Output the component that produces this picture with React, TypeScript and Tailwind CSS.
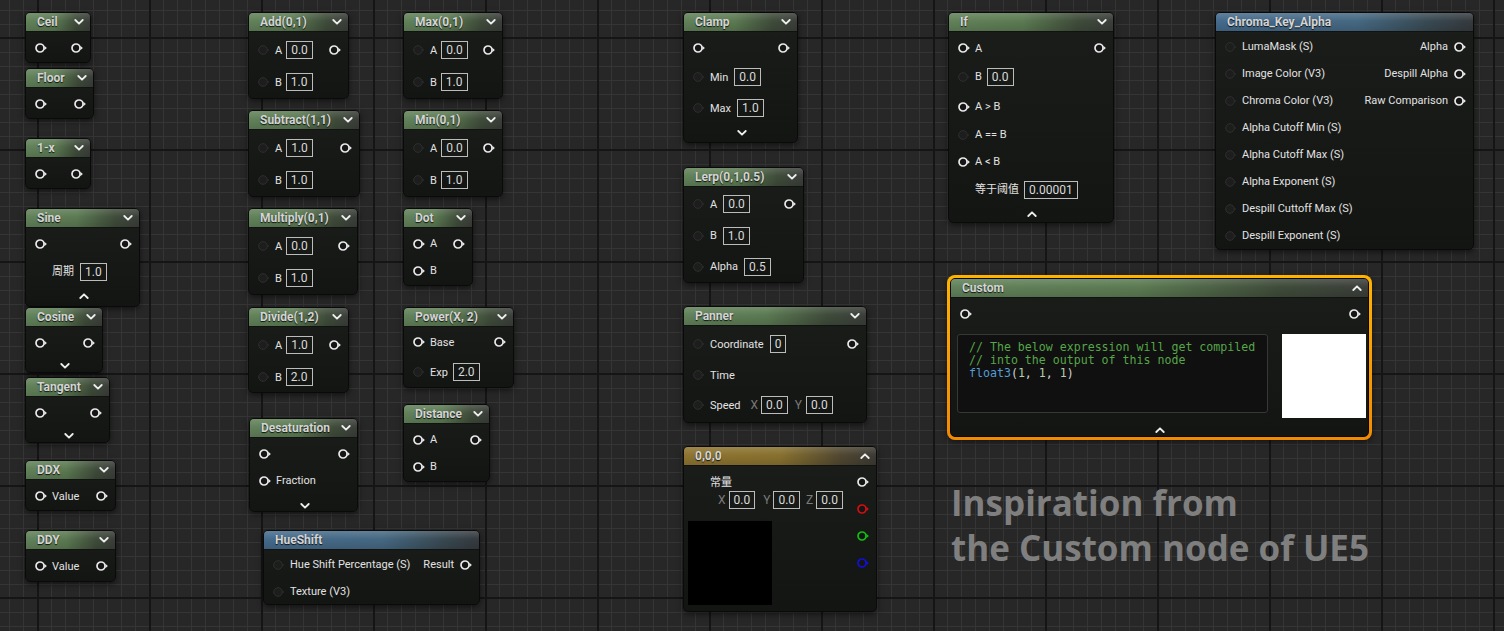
import React from "react";

type Tone = "green" | "blue" | "gold";

const HEAD: Record<Tone, string> = {
  green:
    "bg-[image:linear-gradient(to_bottom,rgba(255,255,255,0.14),rgba(255,255,255,0)_45%,rgba(0,0,0,0.12)),linear-gradient(to_right,#62825a_0%,#5b7a52_45%,#3f4c3a_78%,#3b3e3a_100%)]",
  blue:
    "bg-[image:linear-gradient(to_bottom,rgba(255,255,255,0.16),rgba(255,255,255,0)_45%,rgba(0,0,0,0.12)),linear-gradient(to_right,#456a8c_0%,#456882_55%,#38474f_85%,#353a3e_100%)]",
  gold:
    "bg-[image:linear-gradient(to_bottom,rgba(255,255,255,0.14),rgba(255,255,255,0)_45%,rgba(0,0,0,0.12)),linear-gradient(to_right,#8e7431_0%,#88712f_50%,#504731_82%,#3c3a34_100%)]",
};

function Pin({ on = true, color = "#e8e8e8" }: { on?: boolean; color?: string }) {
  if (!on)
    return (
      <svg width="12" height="10" viewBox="0 0 12 10" className="shrink-0">
        <circle cx="5" cy="5" r="4.3" fill="#1c1d1c" stroke="#2f302f" strokeWidth="1" />
        <path d="M9.6 3.4 L11.4 5 L9.6 6.6 Z" fill="#2a2b2a" />
      </svg>
    );
  return (
    <svg width="12" height="10" viewBox="0 0 12 10" className="shrink-0">
      <circle cx="5" cy="5" r="4" fill="#151515" stroke={color} strokeWidth="1.7" />
      <path d="M9.3 2.8 L11.9 5 L9.3 7.2 Z" fill={color} />
    </svg>
  );
}

function Chevron({ up = false }: { up?: boolean }) {
  return (
    <svg width="10" height="6" viewBox="0 0 10 6" className="shrink-0">
      <path
        d={up ? "M1.3 5 L5 1.3 L8.7 5" : "M1.3 1 L5 4.7 L8.7 1"}
        fill="none"
        stroke="#eeeeee"
        strokeWidth="1.8"
        strokeLinecap="round"
        strokeLinejoin="round"
      />
    </svg>
  );
}

function Field({ v, className = "" }: { v: string; className?: string }) {
  return (
    <span
      className={`inline-flex h-[18px] items-center border border-[#bcbcbc] px-[4px] text-[12px] leading-none text-[#dadada] ${className}`}
    >
      {v}
    </span>
  );
}

function Label({ t, className = "" }: { t: string; className?: string }) {
  return <span className={`whitespace-nowrap text-[11px] leading-none text-[#e2e2e2] ${className}`}>{t}</span>;
}

function Row({ h, className = "", children }: { h: string; className?: string; children?: React.ReactNode }) {
  return <div className={`flex items-center ${h} ${className}`}>{children}</div>;
}

function ChevRow({ h, up = false, className = "" }: { h: string; up?: boolean; className?: string }) {
  return (
    <div className={`flex items-center justify-center ${h} ${className}`}>
      <Chevron up={up} />
    </div>
  );
}

function Node({
  pos,
  title,
  tone = "green",
  chev = "down",
  body = "pt-[3px] pl-[9px] pr-[7px]",
  flat = false,
  children,
}: {
  pos: string;
  title: string;
  tone?: Tone;
  chev?: "down" | "up" | null;
  body?: string;
  flat?: boolean;
  children?: React.ReactNode;
}) {
  return (
    <div
      className={`absolute ${pos} flex flex-col overflow-hidden rounded-[5px] border border-[#0a0a0a] bg-[linear-gradient(to_bottom,#1b1d1b,#131513)] ${
        flat ? "" : "shadow-[0_2px_6px_rgba(0,0,0,0.55)]"
      }`}
    >
      <div
        className={`flex h-[19px] shrink-0 items-center justify-between border-b border-[#111311] pl-[11px] pr-[6px] ${HEAD[tone]}`}
      >
        <span className="whitespace-nowrap text-[12px] font-bold leading-none text-[#d4d4d4] [text-shadow:0_1px_1px_rgba(0,0,0,0.85)]">
          {title}
        </span>
        {chev && <Chevron up={chev === "up"} />}
      </div>
      <div className={`flex flex-col ${body}`}>{children}</div>
    </div>
  );
}

const pinsRow = (
  <Row h="h-[26px]">
    <Pin />
    <div className="flex-1" />
    <Pin />
  </Row>
);

function TwoInput({ a, b }: { a: string; b: string }) {
  return (
    <>
      <Row h="h-[32px]">
        <Pin on={false} />
        <Label t="A" className="ml-[5px]" />
        <Field v={a} className="ml-[4px]" />
        <div className="flex-1" />
        <Pin />
      </Row>
      <Row h="h-[32px]">
        <Pin on={false} />
        <Label t="B" className="ml-[5px]" />
        <Field v={b} className="ml-[4px]" />
      </Row>
    </>
  );
}

function AB() {
  return (
    <>
      <Row h="h-[27px]">
        <Pin />
        <Label t="A" className="ml-[5px]" />
        <div className="flex-1" />
        <Pin />
      </Row>
      <Row h="h-[27px]">
        <Pin />
        <Label t="B" className="ml-[5px]" />
      </Row>
    </>
  );
}

function Grid() {
  return (
    <svg className="absolute inset-0" width="1504" height="631">
      <defs>
        <pattern id="minor" width="14" height="14" x="37" y="38" patternUnits="userSpaceOnUse">
          <rect x="0" y="0" width="14" height="1" fill="#353535" />
          <rect x="0" y="0" width="1" height="14" fill="#353535" />
        </pattern>
        <pattern id="major" width="112" height="112" x="37" y="37" patternUnits="userSpaceOnUse">
          <rect x="0" y="0" width="112" height="2" fill="#151515" />
          <rect x="0" y="0" width="2" height="112" fill="#151515" />
        </pattern>
      </defs>
      <rect width="1504" height="631" fill="#272727" />
      <rect width="1504" height="631" fill="url(#minor)" />
      <rect width="1504" height="631" fill="url(#major)" />
    </svg>
  );
}

const chroma: [string, string | null][] = [
  ["LumaMask (S)", "Alpha"],
  ["Image Color (V3)", "Despill Alpha"],
  ["Chroma Color (V3)", "Raw Comparison"],
  ["Alpha Cutoff Min (S)", null],
  ["Alpha Cutoff Max (S)", null],
  ["Alpha Exponent (S)", null],
  ["Despill Cuttoff Max (S)", null],
  ["Despill Exponent (S)", null],
];

export default function App() {
  return (
    <div className="relative h-[631px] w-[1504px] overflow-hidden bg-[#272727] font-['Roboto','Noto_Sans_CJK_SC',sans-serif]">
      <Grid />

      {/* column 1 */}
      <Node pos="left-[25px] top-[12px] w-[66px] h-[51px]" title="Ceil">{pinsRow}</Node>
      <Node pos="left-[25px] top-[68px] w-[69px] h-[51px]" title="Floor">{pinsRow}</Node>
      <Node pos="left-[25px] top-[138px] w-[66px] h-[51px]" title="1-x">{pinsRow}</Node>
      <Node pos="left-[25px] top-[208px] w-[115px] h-[99px]" title="Sine">
        {pinsRow}
        <Row h="h-[29px]" className="pl-[17px]">
          <Label t="周期" />
          <Field v="1.0" className="ml-[6px]" />
        </Row>
        <ChevRow h="h-[20px]" up />
      </Node>
      <Node pos="left-[25px] top-[307px] w-[78px] h-[66px]" title="Cosine">
        {pinsRow}
        <ChevRow h="h-[20px]" />
      </Node>
      <Node pos="left-[25px] top-[377px] w-[85px] h-[66px]" title="Tangent">
        {pinsRow}
        <ChevRow h="h-[20px]" />
      </Node>
      <Node pos="left-[25px] top-[460px] w-[91px] h-[51px]" title="DDX">
        <Row h="h-[26px]">
          <Pin />
          <Label t="Value" className="ml-[5px]" />
          <div className="flex-1" />
          <Pin />
        </Row>
      </Node>
      <Node pos="left-[25px] top-[530px] w-[91px] h-[52px]" title="DDY">
        <Row h="h-[26px]">
          <Pin />
          <Label t="Value" className="ml-[5px]" />
          <div className="flex-1" />
          <Pin />
        </Row>
      </Node>

      {/* column 2 */}
      <Node pos="left-[248px] top-[12px] w-[101px] h-[87px]" title="Add(0,1)" body="pt-[2px] pl-[9px] pr-[7px]">
        <TwoInput a="0.0" b="1.0" />
      </Node>
      <Node pos="left-[248px] top-[110px] w-[112px] h-[87px]" title="Subtract(1,1)" body="pt-[2px] pl-[9px] pr-[7px]">
        <TwoInput a="1.0" b="1.0" />
      </Node>
      <Node pos="left-[248px] top-[208px] w-[110px] h-[87px]" title="Multiply(0,1)" body="pt-[2px] pl-[9px] pr-[7px]">
        <TwoInput a="0.0" b="1.0" />
      </Node>
      <Node pos="left-[248px] top-[307px] w-[101px] h-[86px]" title="Divide(1,2)" body="pt-[2px] pl-[9px] pr-[7px]">
        <TwoInput a="1.0" b="2.0" />
      </Node>
      <Node pos="left-[249px] top-[418px] w-[109px] h-[94px]" title="Desaturation" body="pt-[2px] pl-[9px] pr-[7px]">
        <Row h="h-[27px]">
          <Pin />
          <div className="flex-1" />
          <Pin />
        </Row>
        <Row h="h-[27px]">
          <Pin />
          <Label t="Fraction" className="ml-[5px]" />
        </Row>
        <ChevRow h="h-[23px]" />
      </Node>
      <Node pos="left-[263px] top-[530px] w-[217px] h-[75px]" title="HueShift" tone="blue" chev={null} body="pt-[1px] pl-[9px] pr-[7px]">
        <Row h="h-[27px]">
          <Pin on={false} />
          <Label t="Hue Shift Percentage (S)" className="ml-[5px]" />
          <div className="flex-1" />
          <Label t="Result" className="mr-[6px]" />
          <Pin />
        </Row>
        <Row h="h-[27px]">
          <Pin on={false} />
          <Label t="Texture (V3)" className="ml-[5px]" />
        </Row>
      </Node>

      {/* column 3 */}
      <Node pos="left-[403px] top-[12px] w-[100px] h-[87px]" title="Max(0,1)" body="pt-[2px] pl-[9px] pr-[7px]">
        <TwoInput a="0.0" b="1.0" />
      </Node>
      <Node pos="left-[403px] top-[110px] w-[100px] h-[87px]" title="Min(0,1)" body="pt-[2px] pl-[9px] pr-[7px]">
        <TwoInput a="0.0" b="1.0" />
      </Node>
      <Node pos="left-[403px] top-[208px] w-[70px] h-[78px]" title="Dot" body="pt-[2px] pl-[9px] pr-[7px]">
        <AB />
      </Node>
      <Node pos="left-[403px] top-[307px] w-[111px] h-[81px]" title="Power(X, 2)" body="pl-[9px] pr-[7px]">
        <Row h="h-[30px]">
          <Pin />
          <Label t="Base" className="ml-[5px]" />
          <div className="flex-1" />
          <Pin />
        </Row>
        <Row h="h-[30px]">
          <Pin on={false} />
          <Label t="Exp" className="ml-[5px]" />
          <Field v="2.0" className="ml-[5px]" />
        </Row>
      </Node>
      <Node pos="left-[403px] top-[404px] w-[87px] h-[78px]" title="Distance" body="pt-[2px] pl-[9px] pr-[7px]">
        <AB />
      </Node>

      {/* column 4 */}
      <Node pos="left-[683px] top-[12px] w-[115px] h-[131px]" title="Clamp">
        {pinsRow}
        <Row h="h-[32px]">
          <Pin on={false} />
          <Label t="Min" className="ml-[5px]" />
          <Field v="0.0" className="ml-[6px]" />
        </Row>
        <Row h="h-[30px]">
          <Pin on={false} />
          <Label t="Max" className="ml-[5px]" />
          <Field v="1.0" className="ml-[6px]" />
        </Row>
        <ChevRow h="h-[20px]" />
      </Node>
      <Node pos="left-[683px] top-[167px] w-[121px] h-[116px]" title="Lerp(0,1,0.5)" body="pt-[1px] pl-[9px] pr-[7px]">
        <Row h="h-[32px]">
          <Pin on={false} />
          <Label t="A" className="ml-[5px]" />
          <Field v="0.0" className="ml-[6px]" />
          <div className="flex-1" />
          <Pin />
        </Row>
        <Row h="h-[31px]">
          <Pin on={false} />
          <Label t="B" className="ml-[5px]" />
          <Field v="1.0" className="ml-[6px]" />
        </Row>
        <Row h="h-[31px]">
          <Pin on={false} />
          <Label t="Alpha" className="ml-[5px]" />
          <Field v="0.5" className="ml-[6px]" />
        </Row>
      </Node>
      <Node pos="left-[683px] top-[306px] w-[184px] h-[117px]" title="Panner" body="pt-[2px] pl-[9px] pr-[7px]">
        <Row h="h-[32px]">
          <Pin on={false} />
          <Label t="Coordinate" className="ml-[5px]" />
          <Field v="0" className="ml-[6px]" />
          <div className="flex-1" />
          <Pin />
        </Row>
        <Row h="h-[30px]">
          <Pin on={false} />
          <Label t="Time" className="ml-[5px]" />
        </Row>
        <Row h="h-[30px]">
          <Pin on={false} />
          <Label t="Speed" className="ml-[5px]" />
          <span className="ml-[10px] text-[12px] text-[#7a7a7a]">X</span>
          <Field v="0.0" className="ml-[3px]" />
          <span className="ml-[7px] text-[12px] text-[#7a7a7a]">Y</span>
          <Field v="0.0" className="ml-[4px]" />
        </Row>
      </Node>
      <Node
        pos="left-[683px] top-[446px] w-[194px] h-[166px]"
        title="0,0,0"
        tone="gold"
        chev="up"
        body="flex-row justify-between pl-[4px] pr-[7px]"
      >
        <div className="flex flex-col pt-[7px]">
          <Row h="h-[18px]" className="pl-[22px]">
            <Label t="常量" />
          </Row>
          <Row h="h-[18px]" className="pl-[30px]">
            <span className="text-[12px] text-[#7a7a7a]">X</span>
            <Field v="0.0" className="ml-[3px]" />
            <span className="ml-[8px] text-[12px] text-[#7a7a7a]">Y</span>
            <Field v="0.0" className="ml-[3px]" />
            <span className="ml-[6px] text-[12px] text-[#7a7a7a]">Z</span>
            <Field v="0.0" className="ml-[3px]" />
          </Row>
          <div className="mt-[12px] h-[84px] w-[84px] bg-black" />
        </div>
        <div className="flex flex-col gap-[17px] pt-[11px]">
          <Pin />
          <Pin color="#d01010" />
          <Pin color="#10c010" />
          <Pin color="#1010d8" />
        </div>
      </Node>

      {/* column 5 */}
      <Node pos="left-[948px] top-[12px] w-[166px] h-[211px]" title="If">
        <Row h="h-[26px]">
          <Pin />
          <Label t="A" className="ml-[5px]" />
          <div className="flex-1" />
          <Pin />
        </Row>
        <Row h="h-[31px]">
          <Pin on={false} />
          <Label t="B" className="ml-[5px]" />
          <Field v="0.0" className="ml-[5px]" />
        </Row>
        <Row h="h-[29px]">
          <Pin />
          <Label t="A > B" className="ml-[5px]" />
        </Row>
        <Row h="h-[27px]">
          <Pin on={false} />
          <Label t="A == B" className="ml-[5px]" />
        </Row>
        <Row h="h-[27px]">
          <Pin />
          <Label t="A < B" className="ml-[5px]" />
        </Row>
        <Row h="h-[29px]" className="pl-[17px]">
          <Label t="等于阈值" />
          <Field v="0.00001" className="ml-[5px]" />
        </Row>
        <ChevRow h="h-[20px]" up />
      </Node>

      <Node pos="left-[1215px] top-[12px] w-[259px] h-[238px]" title="Chroma_Key_Alpha" tone="blue" chev={null} body="pt-[1px] pl-[9px] pr-[7px]">
        {chroma.map(([i, o]) => (
          <Row key={i} h="h-[27px]">
            <Pin on={false} />
            <Label t={i} className="ml-[5px]" />
            <div className="flex-1" />
            {o && (
              <>
                <Label t={o} className="mr-[6px]" />
                <Pin />
              </>
            )}
          </Row>
        ))}
      </Node>

      {/* selected custom node */}
      <div className="absolute left-[947px] top-[275px] h-[165px] w-[425px] rounded-[8px] bg-[linear-gradient(to_bottom,#ffb300,#f18a00)] shadow-[0_2px_6px_rgba(0,0,0,0.5)]">
        <Node pos="inset-[3px]" title="Custom" chev="up" body="pt-[3px]" flat>
          <Row h="h-[26px]" className="pl-[9px] pr-[7px]">
            <Pin />
            <div className="flex-1" />
            <Pin />
          </Row>
          <div className="mt-[7px] flex pl-[6px]">
            <div className="h-[79px] w-[311px] rounded-[3px] border border-[#363836] bg-[#0f100f] pl-[11px] pt-[6px] font-['DejaVu_Sans_Mono',monospace] text-[11.6px] leading-[13px] whitespace-pre">
              <div className="text-[#57a64a]">// The below expression will get compiled</div>
              <div className="text-[#57a64a]">// into the output of this node</div>
              <div>
                <span className="text-[#569cd6]">float3</span>
                <span className="text-[#d4d4d4]">(</span>
                <span className="text-[#b5cea8]">1</span>
                <span className="text-[#d4d4d4]">, </span>
                <span className="text-[#b5cea8]">1</span>
                <span className="text-[#d4d4d4]">, </span>
                <span className="text-[#b5cea8]">1</span>
                <span className="text-[#d4d4d4]">)</span>
              </div>
            </div>
            <div className="ml-[14px] h-[84px] w-[84px] bg-white" />
          </div>
          <ChevRow h="h-[12px]" up className="mt-[6px]" />
        </Node>
      </div>

      <div className="absolute left-[951px] top-[480px] font-['Open_Sans',sans-serif] text-[35px] font-bold leading-[45px] text-[#7f7f7f]">
        <div>Inspiration from</div>
        <div>the Custom node of UE5</div>
      </div>
    </div>
  );
}
